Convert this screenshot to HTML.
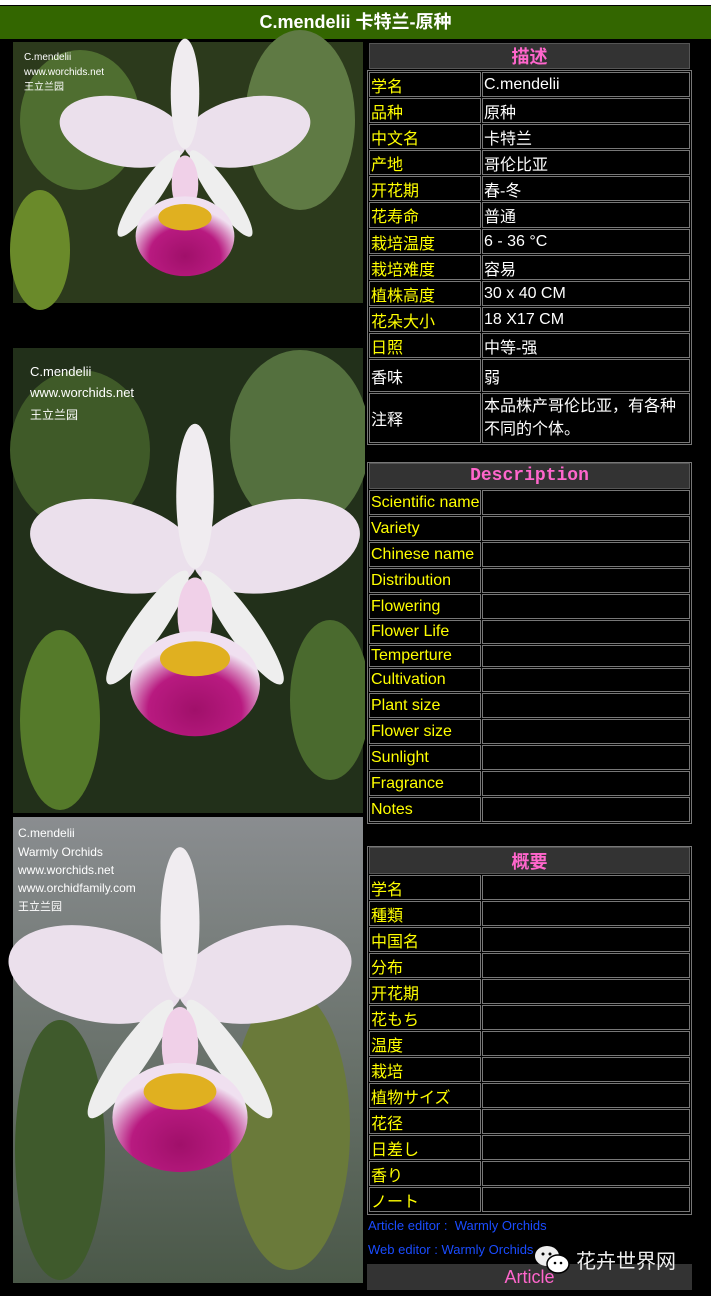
<!DOCTYPE html>
<html><head><meta charset="utf-8"><style>
body{margin:0;width:711px;height:1296px;background:#000;position:relative;overflow:hidden;font-family:"Liberation Sans","Noto Sans CJK SC",sans-serif;}
.a{position:absolute}
.f{position:absolute;left:367px;width:325px;border:1px solid #777;box-sizing:border-box}
.h{position:absolute;left:369px;width:321px;background:#333;color:#f6c;text-align:center;font-weight:bold;font-size:18px;border:1px solid #555;box-sizing:border-box;display:flex;align-items:center;justify-content:center}
.r{position:absolute;left:369px;width:321px;display:flex;gap:1px}
.r div{border:1px solid #777;box-sizing:border-box;height:100%;display:flex;align-items:center;font-size:16px;color:#fff;padding-left:1px;white-space:nowrap;overflow:hidden}
.r div:first-child{width:112px;color:#ff0;flex:none}
.r div:last-child{flex:1}
</style></head><body>
<div class="a" style="left:0;top:0;width:711px;height:5px;background:#fff"></div>
<div class="a" style="left:0;top:6px;width:711px;height:33px;background:#336600;color:#fff;font-size:18px;font-weight:bold;text-align:center;line-height:33px">C.mendelii 卡特兰-原种</div>

<svg class="a" style="left:0;top:0" width="365" height="1296">
<defs>
<radialGradient id="lip" cx="0.5" cy="0.75" r="0.6"><stop offset="0" stop-color="#a0106a"/><stop offset="0.6" stop-color="#b81a80"/><stop offset="1" stop-color="#f0e0f0"/></radialGradient>
<g id="orc">
<ellipse cx="-65" cy="-35" rx="68" ry="36" fill="#ebe0ec" transform="rotate(12 -65 -35)"/>
<ellipse cx="65" cy="-35" rx="68" ry="36" fill="#ebe0ec" transform="rotate(-12 65 -35)"/>
<ellipse cx="0" cy="-75" rx="15" ry="58" fill="#f0ecf0"/>
<ellipse cx="-38" cy="30" rx="12" ry="55" fill="#eee" transform="rotate(35 -38 30)"/>
<ellipse cx="38" cy="30" rx="12" ry="55" fill="#eee" transform="rotate(-35 38 30)"/>
<ellipse cx="0" cy="20" rx="14" ry="30" fill="#f0d0e8"/>
<ellipse cx="0" cy="75" rx="52" ry="42" fill="url(#lip)"/>
<ellipse cx="0" cy="55" rx="28" ry="14" fill="#e0b020"/>
</g>
<linearGradient id="g3" x1="0" y1="0" x2="0" y2="1"><stop offset="0" stop-color="#8a8d90"/><stop offset="1" stop-color="#4a5848"/></linearGradient>
</defs>
<rect x="13" y="42" width="350" height="261" fill="#2c3a1c"/>
<ellipse cx="300" cy="120" rx="55" ry="90" fill="#5f7a44"/>
<ellipse cx="80" cy="120" rx="60" ry="70" fill="#4f6e30"/>
<ellipse cx="40" cy="250" rx="30" ry="60" fill="#6a8a2a"/>
<use href="#orc" transform="translate(185 165) scale(0.95)"/>
<rect x="13" y="348" width="350" height="465" fill="#22301a"/>
<ellipse cx="300" cy="440" rx="70" ry="90" fill="#54703e"/>
<ellipse cx="80" cy="450" rx="70" ry="80" fill="#3f5a28"/>
<ellipse cx="60" cy="720" rx="40" ry="90" fill="#557a2a"/>
<ellipse cx="330" cy="700" rx="40" ry="80" fill="#4a6a2e"/>
<use href="#orc" transform="translate(195 590) scale(1.25)"/>
<rect x="13" y="817" width="350" height="466" fill="url(#g3)"/>
<ellipse cx="290" cy="1130" rx="60" ry="140" fill="#6a7a3a"/>
<ellipse cx="60" cy="1150" rx="45" ry="130" fill="#3f5a2c"/>
<use href="#orc" transform="translate(180 1020) scale(1.3)"/>
<g fill="#fff" font-family="Liberation Sans,sans-serif">
<text x="24" y="60" font-size="10">C.mendelii</text><text x="24" y="75" font-size="10">www.worchids.net</text><text x="24" y="90" font-size="10" font-family="Noto Sans CJK SC">王立兰园</text>
<text x="30" y="376" font-size="13">C.mendelii</text><text x="30" y="397" font-size="13">www.worchids.net</text><text x="30" y="419" font-size="12" font-family="Noto Sans CJK SC">王立兰园</text>
<text x="18" y="837" font-size="12">C.mendelii</text><text x="18" y="856" font-size="12">Warmly Orchids</text><text x="18" y="874" font-size="12">www.worchids.net</text><text x="18" y="892" font-size="12">www.orchidfamily.com</text><text x="18" y="910" font-size="11" font-family="Noto Sans CJK SC">王立兰园</text>
</g>
</svg>

<div class="h" style="top:43px;height:26px">描述</div>
<div class="f" style="top:70px;height:375px"></div>
<div class="r" style="top:72px;height:25px"><div>学名</div><div>C.mendelii</div></div>
<div class="r" style="top:98px;height:25px"><div>品种</div><div>原种</div></div>
<div class="r" style="top:124px;height:25px"><div>中文名</div><div>卡特兰</div></div>
<div class="r" style="top:150px;height:25px"><div>产地</div><div>哥伦比亚</div></div>
<div class="r" style="top:176px;height:25px"><div>开花期</div><div>春-冬</div></div>
<div class="r" style="top:202px;height:26px"><div>花寿命</div><div>普通</div></div>
<div class="r" style="top:229px;height:25px"><div>栽培温度</div><div>6 - 36 °C</div></div>
<div class="r" style="top:255px;height:25px"><div>栽培难度</div><div>容易</div></div>
<div class="r" style="top:281px;height:25px"><div>植株高度</div><div>30 x 40 CM</div></div>
<div class="r" style="top:307px;height:25px"><div>花朵大小</div><div>18 X17 CM</div></div>
<div class="r" style="top:333px;height:25px"><div>日照</div><div>中等-强</div></div>
<div class="r" style="top:359px;height:33px"><div style="color:#fff">香味</div><div>弱</div></div>
<div class="r" style="top:393px;height:50px"><div style="color:#fff">注释</div><div style="white-space:normal;line-height:23px">本品株产哥伦比亚，有各种不同的个体。</div></div>

<div class="f" style="top:462px;height:362px"></div>
<div class="h" style="top:463px;height:26px;font-family:'Liberation Mono',monospace">Description</div>
<div class="r" style="top:490px;height:25px"><div>Scientific name</div><div></div></div>
<div class="r" style="top:516px;height:25px"><div>Variety</div><div></div></div>
<div class="r" style="top:542px;height:25px"><div>Chinese name</div><div></div></div>
<div class="r" style="top:568px;height:25px"><div>Distribution</div><div></div></div>
<div class="r" style="top:594px;height:25px"><div>Flowering</div><div></div></div>
<div class="r" style="top:620px;height:24px"><div>Flower Life</div><div></div></div>
<div class="r" style="top:645px;height:22px"><div>Temperture</div><div></div></div>
<div class="r" style="top:668px;height:24px"><div>Cultivation</div><div></div></div>
<div class="r" style="top:693px;height:25px"><div>Plant size</div><div></div></div>
<div class="r" style="top:719px;height:25px"><div>Flower size</div><div></div></div>
<div class="r" style="top:745px;height:25px"><div>Sunlight</div><div></div></div>
<div class="r" style="top:771px;height:25px"><div>Fragrance</div><div></div></div>
<div class="r" style="top:797px;height:25px"><div>Notes</div><div></div></div>

<div class="f" style="top:846px;height:369px"></div>
<div class="h" style="top:847px;height:27px">概要</div>
<div class="r" style="top:875px;height:25px"><div>学名</div><div></div></div>
<div class="r" style="top:901px;height:25px"><div>種類</div><div></div></div>
<div class="r" style="top:927px;height:25px"><div>中国名</div><div></div></div>
<div class="r" style="top:953px;height:25px"><div>分布</div><div></div></div>
<div class="r" style="top:979px;height:25px"><div>开花期</div><div></div></div>
<div class="r" style="top:1005px;height:25px"><div>花もち</div><div></div></div>
<div class="r" style="top:1031px;height:25px"><div>温度</div><div></div></div>
<div class="r" style="top:1057px;height:25px"><div>栽培</div><div></div></div>
<div class="r" style="top:1083px;height:25px"><div>植物サイズ</div><div></div></div>
<div class="r" style="top:1109px;height:25px"><div>花径</div><div></div></div>
<div class="r" style="top:1135px;height:25px"><div>日差し</div><div></div></div>
<div class="r" style="top:1161px;height:25px"><div>香り</div><div></div></div>
<div class="r" style="top:1187px;height:25px"><div>ノート</div><div></div></div>

<div class="a" style="left:368px;top:1218px;color:#1a4cff;font-size:13px">Article editor :&nbsp; Warmly Orchids</div>
<div class="a" style="left:368px;top:1242px;color:#1a4cff;font-size:13px">Web editor : Warmly Orchids</div>
<div class="a" style="left:367px;top:1264px;width:325px;height:26px;background:#333;color:#f6c;text-align:center;font-size:18px;line-height:26px">Article</div>
<svg class="a" style="left:534px;top:1245px" width="36" height="30"><ellipse cx="13" cy="11" rx="12" ry="10" fill="#eee"/><ellipse cx="24" cy="19" rx="11" ry="9" fill="#fff" stroke="#000" stroke-width="1.5"/><circle cx="9" cy="9" r="1.5" fill="#000"/><circle cx="16" cy="9" r="1.5" fill="#000"/><circle cx="21" cy="18" r="1.3" fill="#000"/><circle cx="27" cy="18" r="1.3" fill="#000"/></svg>
<div class="a" style="left:576px;top:1246px;color:#eee;font-size:20px;font-family:'Noto Sans CJK SC',sans-serif;line-height:28px">花卉世界网</div>
</body></html>
